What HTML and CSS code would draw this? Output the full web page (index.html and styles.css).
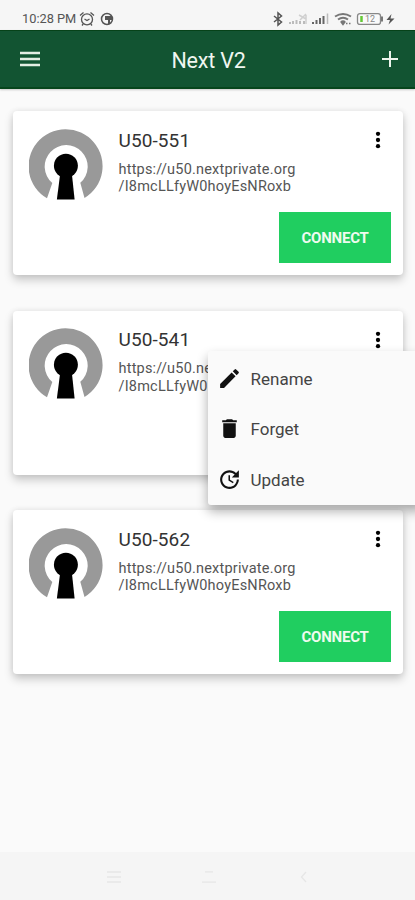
FILE: index.html
```html
<!DOCTYPE html>
<html lang="en">
<head>
<meta charset="utf-8">
<meta name="viewport" content="width=device-width, initial-scale=1">
<title>Next V2</title>
<link rel="stylesheet" href="styles.css">
</head>
<body>
<svg class="defs" width="0" height="0" aria-hidden="true">
  <symbol id="keyhole" viewBox="0 0 74 74">
    <path fill="#999" d="M18 69.2A37 37 0 1 1 55.5 69L51.3 53.8A21.5 21.5 0 1 0 23.3 54Z"/>
    <circle cx="36.900" cy="36.7" r="12"/>
    <path d="M31 46H43L45.600 70.6H27.900Z"/>
  </symbol>
  <symbol id="dots" viewBox="0 0 6 18">
    <circle cx="3" cy="2.8" r="2.15"/><circle cx="3" cy="9" r="2.15"/><circle cx="3" cy="15.2" r="2.15"/>
  </symbol>
</svg>
<div class="screen">
  <div class="status">
    <span class="clock">10:28 PM</span>
    <svg class="alarm" viewBox="0 0 16 16" fill="none" stroke="#555" stroke-width="1.3"><circle cx="8" cy="8.4" r="5.5"/><path d="M1 4.5L4.5 1.500M15 4.500L11.500 1.500M5.500 8L8 9.500L10.500 8M4.200 13L3 14.500M11.800 13L13 14.500"/></svg>
    <svg class="badge" viewBox="0 0 14 14"><circle cx="7" cy="7" r="5.500" fill="none" stroke="#555" stroke-width="1.500"/><path fill="#555" d="M5 4H12V8H10V11L8 13V8H5Z"/></svg>
    <svg class="system" viewBox="0 0 128 16">
      <path d="M2 5L9.500 11L6 14V2L9.500 5L2 11" fill="none" stroke="#555" stroke-width="1.500"/>
      <path d="M18 13v-2M21 13v-3M24.500 13v-4M28 13v-3M32 13v-3" stroke="#bbb" stroke-width="2"/>
      <path d="M27 4L34 8M34 3L28 9M34 4V13" stroke="#d0d0d0" stroke-width="1.500"/>
      <path d="M41 13v-2M44.500 13v-4M48 13v-6M51.500 13v-8" stroke="#666" stroke-width="2"/><path d="M55.500 13V2.500" stroke="#bbb" stroke-width="1.500"/>
      <path d="M63 5.500Q71 .5 79 5.500M66 8.500Q71 5 76 8.500M69 11Q71 9.500 73 11" fill="none" stroke="#777" stroke-width="2"/><path d="M71 13.500L69.500 11.500H72.500ZM74 12.500h1.500M77 12.500h1.500" stroke="#777" fill="#777" stroke-width="1.500"/>
      <rect x="85.500" y="2.600" width="23" height="10.800" rx="2.500" fill="#fafafa" stroke="#888" stroke-width="1.300"/><path d="M110 5.500V10.500" stroke="#777" stroke-width="2"/><path d="M89.500 5V11" stroke="#65c936" stroke-width="2.500"/>
      <text x="93" y="11" class="charge">12</text>
      <path fill="#555" d="M119.500 3L114.500 9H118L116.500 13.500L122.500 7.500H118.500Z"/>
    </svg>
  </div>
  <header class="bar">
    <svg class="burger" viewBox="0 0 20 16"><path d="M0 2H20M0 8H20M0 14H20" stroke="#e4eee3" stroke-width="2.300"/></svg>
    <h1>Next V2</h1>
    <svg class="plus" viewBox="0 0 16 16"><path d="M8 0V16M0 8H16" stroke="#edf5ed" stroke-width="2"/></svg>
  </header>
  <main class="list">
    <article class="card">
      <svg class="logo"><use href="#keyhole"/></svg>
      <div class="info"><h2>U50-551</h2><p>https://u50.nextprivate.org<br>/I8mcLLfyW0hoyEsNRoxb</p></div>
      <svg class="more"><use href="#dots"/></svg>
      <button class="connect">CONNECT</button>
    </article>
    <article class="card">
      <svg class="logo"><use href="#keyhole"/></svg>
      <div class="info"><h2>U50-541</h2><p>https://u50.ne<br>/I8mcLLfyW0</p></div>
      <svg class="more"><use href="#dots"/></svg>
      <div class="menu">
        <div class="item"><svg viewBox="0 0 24 24"><path d="M3 17.250V21h3.750L17.810 9.940l-3.750-3.750L3 17.250zM20.710 7.040a1 1 0 0 0 0-1.410l-2.340-2.340a1 1 0 0 0-1.410 0l-1.830 1.830 3.750 3.750 1.830-1.830z"/></svg><span>Rename</span></div>
        <div class="item"><svg viewBox="0 0 24 24"><path d="M6 19c0 1.100.9 2 2 2h8c1.100 0 2-.9 2-2V7H6v12zM19 4h-3.500l-1-1h-5l-1 1H5v2h14V4z"/></svg><span>Forget</span></div>
        <div class="item"><svg viewBox="0 0 24 24"><path d="M21 10.120h-6.780l2.740-2.820c-2.730-2.700-7.150-2.800-9.880-.1-2.730 2.710-2.730 7.080 0 9.790s7.150 2.710 9.880 0C18.320 15.650 19 14.080 19 12.100h2c0 1.980-.88 4.550-2.640 6.290-3.510 3.480-9.210 3.480-12.720 0-3.500-3.470-3.530-9.110-.02-12.580s9.140-3.470 12.650 0L21 3v7.120zM12.500 8v4.250l3.500 2.080-.72 1.210L11 13V8h1.500z"/></svg><span>Update</span></div>
      </div>
    </article>
    <article class="card">
      <svg class="logo"><use href="#keyhole"/></svg>
      <div class="info"><h2>U50-562</h2><p>https://u50.nextprivate.org<br>/I8mcLLfyW0hoyEsNRoxb</p></div>
      <svg class="more"><use href="#dots"/></svg>
      <button class="connect">CONNECT</button>
    </article>
  </main>
  <nav class="nav">
    <svg viewBox="0 0 14 12"><path d="M0 1H14M0 6H14M0 11H14"/></svg>
    <svg viewBox="0 0 14 12"><path d="M3 .8H11M0 11.200H14"/></svg>
    <svg viewBox="0 0 14 12"><path d="M9 1L4.500 6L9 11"/></svg>
  </nav>
</div>
</body>
</html>
```
FILE: styles.css
```css
* { box-sizing: border-box; }
body { margin: 0; background: #fafafa; font-family: Roboto, sans-serif; color: #222; }
h1, h2, p { margin: 0; font-weight: 400; }
svg { display: block; flex: none; }
.defs { position: absolute; }
.screen { width: 415px; height: 900px; display: flex; flex-direction: column; overflow: hidden; }
.status { height: 30px; flex: none; padding: 7px 0 0 22px; display: flex; align-items: center; background: #f6f6f6; }
.clock { width: 57px; font-size: 12.800px; color: #555; white-space: nowrap; }
.alarm { width: 16px; height: 16px; }
.badge { width: 14px; height: 14px; margin-left: 5px; }
.system { width: 128px; height: 16px; margin-left: 158px; }
.charge { font-size: 9px; fill: #888; }
.bar { height: 59px; flex: none; padding: 0 17px 0 20px; display: flex; align-items: center; justify-content: space-between; background: #125432; border-top: 1px solid #064219; border-bottom: 2px solid #06451c; box-shadow: 0 1px 2px #0003; }
.burger { width: 20px; height: 16px; }
.plus { width: 16px; height: 16px; }
.bar h1 { font-size: 21.500px; line-height: 26px; letter-spacing: -.2px; color: #f0f6f0; padding: 3px 5px 0 0; }
.list { flex: 1; padding: 22px 12px 0 12.500px; display: flex; flex-direction: column; gap: 35.500px; }
.card { position: relative; height: 164px; flex: none; padding: 17.500px 12.200px 12px 16px; display: grid; grid-template-columns: 74px 1fr 6px; grid-template-rows: 83px 51px; background: #fff; border-radius: 4px; box-shadow: 0 5px 10px #0003, 0 0 6px #00000014; }
.logo { width: 74px; height: 74px; }
.info { padding: 1px 0 0 16px; }
.info h2 { font-size: 19px; line-height: 22px; letter-spacing: .1px; color: #333; }
.info p { margin-top: 9px; font-size: 14.500px; line-height: 17.500px; letter-spacing: .2px; color: #555; white-space: nowrap; }
.more { width: 6px; height: 18px; margin: 2.500px 0 0 -10px; }
.connect { grid-column: 1 / -1; justify-self: end; width: 111.500px; height: 51px; padding: 1px 0 0; border: 0; background: #20ce60; color: #effbef; font: 700 15px Roboto, sans-serif; letter-spacing: -.2px; }
.menu { position: absolute; z-index: 2; left: 195.500px; top: 40.500px; width: 215px; height: 154px; padding: 2.500px 0 0 9px; background: #fafafa; border-radius: 3px; box-shadow: 0 6px 12px #0005; }
.item { height: 50.500px; display: flex; align-items: center; gap: 8.500px; font-size: 17px; color: #444; }
.item svg { width: 25px; height: 25px; fill: #111; margin-top: -1px; }
.nav { height: 48px; flex: none; padding: 2px 104px 0 107px; display: flex; align-items: center; justify-content: space-between; background: #f5f5f5; }
.nav svg { width: 14px; height: 12px; fill: none; stroke: #e6e6e6; stroke-width: 1.300; }
```
